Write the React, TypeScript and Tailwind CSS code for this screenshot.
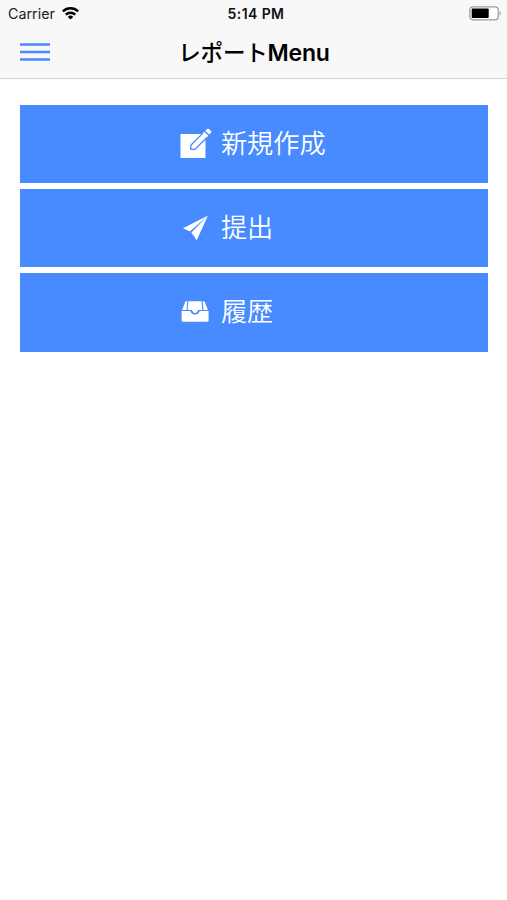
import type { ReactNode } from "react";

function EditIcon() {
  return (
    <svg width="32" height="32" viewBox="0 0 32 32" fill="white" className="overflow-visible">
      <path d="M2.5 6h25V30h-25z" />
      <path
        d="M12.8 21.4V17.2L26.4 3.6l4.2 4.2L17 21.4z"
        fill="white"
        stroke="#488aff"
        strokeWidth="1.3"
        strokeLinejoin="round"
      />
      <path d="M26.3 3.8l4 4-1.6 1.6-4-4z" />
      <path d="M27.3 2.8l1.9-1.9a1.2 1.2 0 0 1 1.7 0l2.1 2.1a1.2 1.2 0 0 1 0 1.7l-1.9 1.9z" />
    </svg>
  );
}

function PlaneIcon() {
  return (
    <svg width="32" height="32" viewBox="0 0 32 32" fill="white">
      <path d="M30 3.5L5 16.3l6.8 3.3z" />
      <path d="M30 3.5L13.4 20.6l5.3 7.6z" />
    </svg>
  );
}

function TrayIcon() {
  return (
    <svg width="32" height="32" viewBox="0 0 32 32" fill="white">
      <path d="M8.4 5.3h.9L8.5 13.9H4.1L7 6.4c.3-.7.7-1.1 1.4-1.1z" />
      <path d="M25.6 5.3h-.9l.8 8.6h4.4L27 6.4c-.3-.7-.7-1.1-1.4-1.1z" />
      <path d="M10.4 5.3h13.2l.8 8.6h-3.6c-.7 0-.9.4-1.2 1.2-.5 1.3-1.3 2-2.6 2s-2.1-.7-2.6-2c-.3-.8-.5-1.2-1.2-1.2H9.6z" />
      <path d="M3.6 14.9h8.8c.6 2.3 2.2 3.6 4.6 3.6s4-1.3 4.6-3.6h9v9.5a1.4 1.4 0 0 1-1.4 1.4H5a1.4 1.4 0 0 1-1.4-1.4z" />
    </svg>
  );
}

function MenuButton({ icon, label }: { icon: ReactNode; label: string }) {
  return (
    <button className="flex h-[78.5px] w-full items-center bg-[#488aff] pl-[157.5px] text-left text-white">
      {icon}
      <span className="pl-[11px] text-[26.2px] leading-none font-[350]">{label}</span>
    </button>
  );
}

export default function App() {
  return (
    <div className="min-h-screen bg-white font-['Inter','Noto_Sans_CJK_JP',sans-serif] text-black">
      <header className="h-[79px] border-b border-[#d4d4d4] bg-[#f8f8f8]">
        <div className="grid h-[27px] grid-cols-3 items-center pr-[5px] pl-2 text-[14px] leading-none">
          <div className="flex items-center gap-[7px]">
            <span className="pt-px text-[14.3px] text-[#222]">Carrier</span>
            <svg width="17" height="13" viewBox="0 0 17 13" fill="none" stroke="black" strokeWidth="2.4">
              <path d="M.8 4.4a11 11 0 0 1 15.4 0" />
              <path d="M3.7 7.7a6.9 6.9 0 0 1 9.6 0" />
              <path d="M8.5 12.6L5.8 9.9a3.8 3.8 0 0 1 5.4 0z" fill="black" stroke="none" />
            </svg>
          </div>
          <span className="pl-[2px] text-center text-[14px] font-semibold tracking-[0.4px] text-[#111]">
            5:14 PM
          </span>
          <svg className="ml-auto" width="33" height="15" viewBox="0 0 33 15">
            <rect x=".8" y=".8" width="28.4" height="13" rx="3" fill="white" stroke="#999" strokeWidth="1.2" />
            <rect x="2.7" y="2.6" width="17" height="9.4" rx="1" fill="black" />
            <path d="M30.6 5v4.8c1.6-.8 1.6-4 0-4.8z" fill="#999" />
          </svg>
        </div>
        <div className="grid h-[51px] grid-cols-[80px_1fr_80px] items-center">
          <svg className="mb-px ml-5" width="30" height="18" viewBox="0 0 30 18" fill="#488aff">
            <path d="M0 .3h30v2.5H0zM0 7.8h30v2.5H0zM0 15.2h30v2.5H0z" />
          </svg>
          <h1 className="pt-px pl-px text-center text-[23px] leading-none font-semibold tracking-[-0.2px] whitespace-nowrap">
            <span className="text-[22.5px] font-medium">レポート</span>Menu
          </h1>
        </div>
      </header>

      <main className="flex flex-col gap-[5.8px] pt-[25.5px] pr-[19.5px] pl-[20.4px]">
        <MenuButton icon={<EditIcon />} label="新規作成" />
        <MenuButton icon={<PlaneIcon />} label="提出" />
        <MenuButton icon={<TrayIcon />} label="履歴" />
      </main>
    </div>
  );
}
